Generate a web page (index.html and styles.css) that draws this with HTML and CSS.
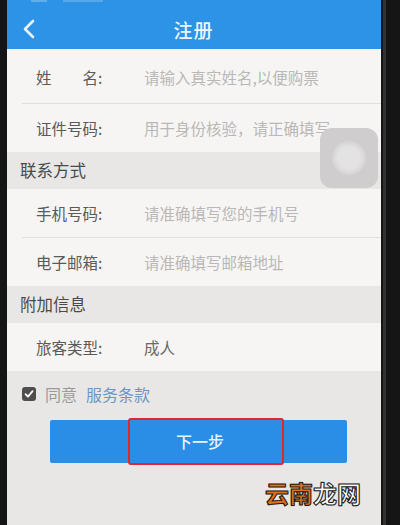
FILE: index.html
```html
<!DOCTYPE html>
<html lang="zh">
<head>
<meta charset="utf-8">
<link rel="stylesheet" href="styles.css">
</head>
<body>
<div class="device">
  <div class="screen">
    <header class="topbar">
      <div class="status"><span class="sig"></span><span class="carrier"></span></div>
      <div class="nav">
        <svg class="back" width="14" height="20" viewBox="0 0 14 20"><path d="M11 2 L3 10 L11 18" fill="none" stroke="#e8f3fd" stroke-width="2.6" stroke-linecap="round" stroke-linejoin="round"/></svg>
        <h1 class="title">注册</h1>
      </div>
    </header>

    <div class="group">
      <div class="row first"><span class="label">姓　　名:</span><span class="ph">请输入真实姓名,以便购票</span></div>
      <div class="row"><span class="label">证件号码:</span><span class="ph">用于身份核验，请正确填写</span></div>
    </div>
    <div class="section">联系方式</div>
    <div class="group">
      <div class="row"><span class="label">手机号码:</span><span class="ph">请准确填写您的手机号</span></div>
      <div class="row"><span class="label">电子邮箱:</span><span class="ph">请准确填写邮箱地址</span></div>
    </div>
    <div class="section">附加信息</div>
    <div class="group">
      <div class="row"><span class="label">旅客类型:</span><span class="val">成人</span></div>
    </div>

    <div class="agree">
      <span class="check"><svg width="10" height="10" viewBox="0 0 10 10"><path d="M1.5 5.2 L4 7.6 L8.6 2.2" fill="none" stroke="#fff" stroke-width="1.8" stroke-linecap="round" stroke-linejoin="round"/></svg></span>
      <span class="agree-text">同意</span>
      <span class="terms">服务条款</span>
    </div>

    <div class="btn-wrap">
      <div class="btn">下一步</div>
      <div class="highlight"></div>
    </div>

    <div class="assist"><span class="assist-dot"></span></div>
    <div class="watermark"><span class="wm-a">云南</span><span class="wm-b">龙网</span></div>
  </div>
  <div class="edge"></div>
</div>
</body>
</html>
```

FILE: styles.css
```css
html, body {
  margin: 0;
  padding: 0;
}
body {
  background: #151515;
  width: 400px;
  height: 525px;
  overflow: hidden;
  font-family: "Noto Sans CJK SC", "Noto Sans", sans-serif;
}
.device {
  display: flex;
  height: 525px;
}
.screen {
  position: relative;
  margin-left: 7px;
  width: 374px;
  height: 525px;
  background: #e8e7e5;
  overflow: hidden;
}
.edge {
  width: 3px;
  margin-left: 2px;
  background: #333131;
}
.topbar {
  background: #2d93e6;
  height: 49px;
  display: flex;
  flex-direction: column;
}
.status {
  height: 10px;
  display: flex;
  gap: 6px;
  padding-left: 24px;
}
.sig {
  width: 16px;
  height: 2px;
  background: rgba(255,255,255,0.25);
}
.carrier {
  width: 40px;
  height: 2px;
  margin-left: 10px;
  background: rgba(255,255,255,0.2);
}
.nav {
  position: relative;
  flex: 1;
  display: flex;
  align-items: center;
  justify-content: center;
}
.back {
  position: absolute;
  left: 15px;
  top: 9px;
}
.title {
  margin: 0 0 0 -1px;
  font-size: 19px;
  font-weight: 500;
  color: #eef6fd;
  letter-spacing: 1px;
}
.group {
  background: #f6f5f3;
}
.row {
  height: 48px;
  display: flex;
  align-items: center;
  margin-left: 15px;
  padding-left: 14px;
  font-size: 15.5px;
}
.row + .row {
  border-top: 1px solid #e0dfdc;
}
.row.first {
  height: 54px;
  padding-top: 2px;
  box-sizing: border-box;
}
.label {
  width: 108px;
  color: #5a5a5a;
  flex: none;
}
.ph {
  color: #b9b8b6;
}
.val {
  color: #6a6a6a;
}
.section {
  height: 37px;
  line-height: 37px;
  padding-left: 13px;
  font-size: 16.5px;
  color: #4a4a4a;
  background: #e8e7e5;
}
.agree {
  display: flex;
  align-items: center;
  padding-left: 15px;
  margin-top: 14px;
  height: 17px;
  font-size: 16px;
}
.check {
  width: 14px;
  height: 14px;
  border-radius: 3px;
  background: #4e4e4e;
  display: flex;
  align-items: center;
  justify-content: center;
}
.agree-text {
  margin-left: 9px;
  color: #9a9a9a;
}
.terms {
  margin-left: 9px;
  color: #6e94c4;
}
.btn-wrap {
  position: relative;
  margin: 18px 0 0 43px;
  width: 297px;
}
.btn {
  height: 43px;
  line-height: 43px;
  background: #2a8ee6;
  border-radius: 2px;
  color: #e6f2fc;
  font-size: 16px;
  font-weight: 500;
  text-align: center;
  padding-left: 3px;
}
.highlight {
  position: absolute;
  left: 78px;
  top: -2px;
  width: 152px;
  height: 43px;
  border: 2px solid #e3262a;
  border-radius: 3px;
}
.assist {
  position: absolute;
  left: 313px;
  top: 128px;
  width: 58px;
  height: 60px;
  border-radius: 12px;
  background: #cfcdcd;
  display: flex;
  align-items: center;
  justify-content: center;
}
.assist-dot {
  width: 34px;
  height: 34px;
  border-radius: 50%;
  background: radial-gradient(circle, #e4e3e3 45%, #d3d2d2 75%);
}
.watermark {
  position: absolute;
  left: 258px;
  top: 478px;
  font-size: 24px;
  font-weight: 700;
  line-height: 30px;
}
.wm-a {
  color: #e26f1a;
  -webkit-text-stroke: 1px #2a1a10;
  text-shadow: 0 0 1px #000;
}
.wm-b {
  color: #ffffff;
  -webkit-text-stroke: 1px #222;
  text-shadow: 0 0 1px #000;
}
```
